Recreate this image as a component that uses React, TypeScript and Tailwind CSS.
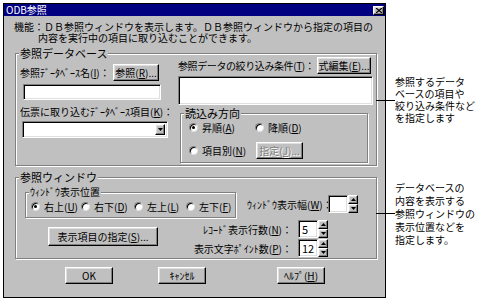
import React from "react";

function U({ c }: { c: string }) {
  return <span className="underline">{c}</span>;
}

const btnCls =
  "flex items-center justify-center bg-[#c0c0c0] border border-t-white border-l-white border-r-black border-b-black shadow-[inset_-1px_-1px_0_#808080,inset_1px_1px_0_#dfdfdf] text-[10px] leading-none whitespace-nowrap shrink-0 ";

const sunkCls =
  "bg-white border border-t-[#808080] border-l-[#808080] border-r-white border-b-white shadow-[inset_1px_1px_0_#000,inset_-1px_-1px_0_#dfdfdf] ";

function Btn({ children, className = "" }: { children: React.ReactNode; className?: string }) {
  return <div className={btnCls + className}>{children}</div>;
}

function Radio({ on }: { on?: boolean }) {
  return (
    <span className="w-[9px] h-[9px] rounded-full bg-white border border-t-[#808080] border-l-[#808080] border-r-[#dfdfdf] border-b-[#dfdfdf] shadow-[inset_1px_1px_0_#000] flex items-center justify-center shrink-0">
      {on && <span className="w-[3px] h-[3px] rounded-full bg-black" />}
    </span>
  );
}

function Group({
  label,
  className = "",
  children,
  labelCls = "text-[11px]",
}: {
  label: string;
  className?: string;
  children?: React.ReactNode;
  labelCls?: string;
}) {
  return (
    <div className={"relative border border-[#808080] shadow-[inset_1px_1px_0_#fff,1px_1px_0_#fff] shrink-0 " + className}>
      <span className={"absolute -top-[7px] left-[3px] bg-[#c0c0c0] px-[1px] leading-[12px] whitespace-nowrap " + labelCls}>
        {label}
      </span>
      {children}
    </div>
  );
}

function Tri({ down }: { down?: boolean }) {
  return (
    <svg width="5" height="3" viewBox="0 0 5 3">
      {down ? <polygon points="0,0 5,0 2.5,3" fill="#000" /> : <polygon points="0,3 5,3 2.5,0" fill="#000" />}
    </svg>
  );
}

function Spin({ value }: { value?: string }) {
  return (
    <div className="flex h-[18px] shrink-0">
      <div className={sunkCls + "w-[20px] h-[18px] text-[11px] leading-[16px] pl-[3px]"}>{value}</div>
      <div className="flex flex-col w-[10px]">
        <div className={btnCls + "h-[9px] w-[10px]"}>
          <Tri />
        </div>
        <div className={btnCls + "h-[9px] w-[10px]"}>
          <Tri down />
        </div>
      </div>
    </div>
  );
}

function RadioItem({ on, label, className = "" }: { on?: boolean; label: React.ReactNode; className?: string }) {
  return (
    <div className={"flex items-center gap-[4px] shrink-0 " + className}>
      <Radio on={on} />
      <span className="text-[10px] leading-[11px] whitespace-nowrap">{label}</span>
    </div>
  );
}

export default function App() {
  return (
    <div className="w-[487px] h-[302px] bg-white flex items-start overflow-hidden relative text-black font-['Noto_Sans_CJK_JP','Noto_Sans',sans-serif]">
      {/* Dialog */}
      <div className="ml-[3px] mt-[3px] w-[383px] h-[295px] border border-black bg-[#c0c0c0] flex flex-col shrink-0">
        {/* Title bar */}
        <div className="h-[12px] bg-[#000080] flex items-center justify-between pl-[2px] pr-[1px]">
          <span className="text-white text-[10px] leading-none">ODB参照</span>
          <div className={btnCls + "w-[11px] h-[9px]"}>
            <svg width="6" height="5" viewBox="0 0 6 5">
              <path d="M0 0 L6 5 M6 0 L0 5" stroke="#000" strokeWidth="1.2" />
            </svg>
          </div>
        </div>

        {/* Description */}
        <div className="mt-[5px] ml-[10px] text-[10px] leading-[11px] whitespace-nowrap">
          <div>機能：ＤＢ参照ウィンドウを表示します。ＤＢ参照ウィンドウから指定の項目の</div>
          <div className="pl-[24px]">内容を実行中の項目に取り込むことができます。</div>
        </div>

        {/* Group 1 */}
        <Group label="参照データベース" className="ml-[11px] mt-[10px] w-[362px] h-[113px] flex">
          {/* Left column */}
          <div className="ml-[4px] w-[147px] flex flex-col shrink-0">
            <div className="mt-[10px] h-[17px] flex items-end">
              <span className="w-[93px] mb-[3px] text-[10px] leading-[11px] whitespace-nowrap">
                参照ﾃﾞｰﾀﾍﾞｰｽ名(<U c="I" />)：
              </span>
              <Btn className="w-[46px] h-[17px]">
                参照(<U c="R" />)...
              </Btn>
            </div>
            <div className={sunkCls + "mt-[3px] ml-[3px] w-[138px] h-[16px]"} />
            <div className="mt-[6px] text-[10px] leading-[11px] whitespace-nowrap">
              伝票に取り込むﾃﾞｰﾀﾍﾞｰｽ項目(<U c="K" />)：
            </div>
            <div className={sunkCls + "mt-[4px] ml-[2px] w-[146px] h-[17px] flex justify-end p-[2px]"}>
              <div className={btnCls + "w-[10px] h-[11px]"}>
                <Tri down />
              </div>
            </div>
          </div>

          {/* Right column */}
          <div className="ml-[11px] w-[195px] flex flex-col shrink-0">
            <div className="mt-[3px] h-[17px] flex items-center">
              <span className="text-[10px] leading-[11px] tracking-[-0.4px] whitespace-nowrap">
                参照データの絞り込み条件(<U c="T" />)：
              </span>
              <Btn className="ml-auto mr-[2px] w-[54px] h-[17px]">
                式編集(<U c="E" />)...
              </Btn>
            </div>
            <div className={sunkCls + "mt-[2px] w-[195px] h-[29px]"} />
            <Group label="読込み方向" className="mt-[8px] ml-[2px] w-[188px] h-[50px]">
              <div className="mt-[7px] h-[12px] flex items-center">
                <RadioItem on label={<>昇順(<U c="A" />)</>} className="ml-[8px] w-[66px]" />
                <RadioItem label={<>降順(<U c="D" />)</>} />
              </div>
              <div className="mt-[9px] h-[17px] flex items-center">
                <RadioItem label={<>項目別(<U c="N" />)</>} className="ml-[8px] w-[67px]" />
                <Btn className="w-[47px] h-[17px] text-[#808080] [text-shadow:1px_1px_0_#fff]">
                  指定(<U c="J" />)...
                </Btn>
              </div>
            </Group>
          </div>
        </Group>

        {/* Group 2 */}
        <Group label="参照ウィンドウ" className="ml-[11px] mt-[11px] w-[362px] h-[82px]">
          <div className="mt-[14px] flex items-start">
            <Group label="ｳｨﾝﾄﾞｳ表示位置" labelCls="text-[10px]" className="ml-[9px] w-[211px] h-[26px]">
              <div className="mt-[7px] h-[12px] flex items-center">
                <RadioItem on label={<>右上(<U c="U" />)</>} className="ml-[5px] w-[50px]" />
                <RadioItem label={<>右下(<U c="D" />)</>} className="w-[53px]" />
                <RadioItem label={<>左上(<U c="L" />)</>} className="w-[52px]" />
                <RadioItem label={<>左下(<U c="F" />)</>} />
              </div>
            </Group>
            <div className="ml-[11px] mt-[3px] h-[18px] flex items-center">
              <span className="w-[81px] text-[10px] leading-[11px] whitespace-nowrap">
                ｳｨﾝﾄﾞｳ表示幅(<U c="W" />)：
              </span>
              <Spin />
            </div>
          </div>
          <div className="flex items-start">
            <Btn className="mt-[9px] ml-[32px] w-[110px] h-[19px]">
              表示項目の指定(<U c="S" />)...
            </Btn>
            <div className="mt-[2px] w-[170px] flex flex-col gap-[1px]">
              <div className="h-[18px] flex items-center justify-end">
                <span className="mr-[6px] text-[10px] leading-[11px] whitespace-nowrap">
                  ﾚｺｰﾄﾞ表示行数(<U c="N" />)：
                </span>
                <Spin value="5" />
              </div>
              <div className="h-[18px] flex items-center justify-end">
                <span className="mr-[6px] text-[10px] leading-[11px] whitespace-nowrap">
                  表示文字ﾎﾟｲﾝﾄ数(<U c="P" />)：
                </span>
                <Spin value="12" />
              </div>
            </div>
          </div>
        </Group>

        {/* Bottom buttons */}
        <div className="mt-[8px] ml-[61px] flex">
          <Btn className="w-[48px] h-[17px]">OK</Btn>
          <Btn className="ml-[45px] w-[48px] h-[17px]">ｷｬﾝｾﾙ</Btn>
          <Btn className="ml-[71px] w-[48px] h-[17px]">
            ﾍﾙﾌﾟ(<U c="H" />)
          </Btn>
        </div>
      </div>

      {/* Annotations */}
      <div className="ml-[9px] pt-[76px] flex flex-col text-[10px] whitespace-nowrap">
        <div className="leading-[12px]">
          <div>参照するデータ</div>
          <div>ベースの項目や</div>
          <div>絞り込み条件など</div>
          <div>を指定します</div>
        </div>
        <div className="mt-[57px] leading-[13px]">
          <div>データベースの</div>
          <div>内容を表示する</div>
          <div>参照ウィンドウの</div>
          <div>表示位置などを</div>
          <div>指定します。</div>
        </div>
      </div>

      {/* Connector lines */}
      <div className="absolute left-[376px] top-[100px] w-[19px] h-px bg-black" />
      <div className="absolute left-[376px] top-[213px] w-[19px] h-px bg-black" />
    </div>
  );
}
